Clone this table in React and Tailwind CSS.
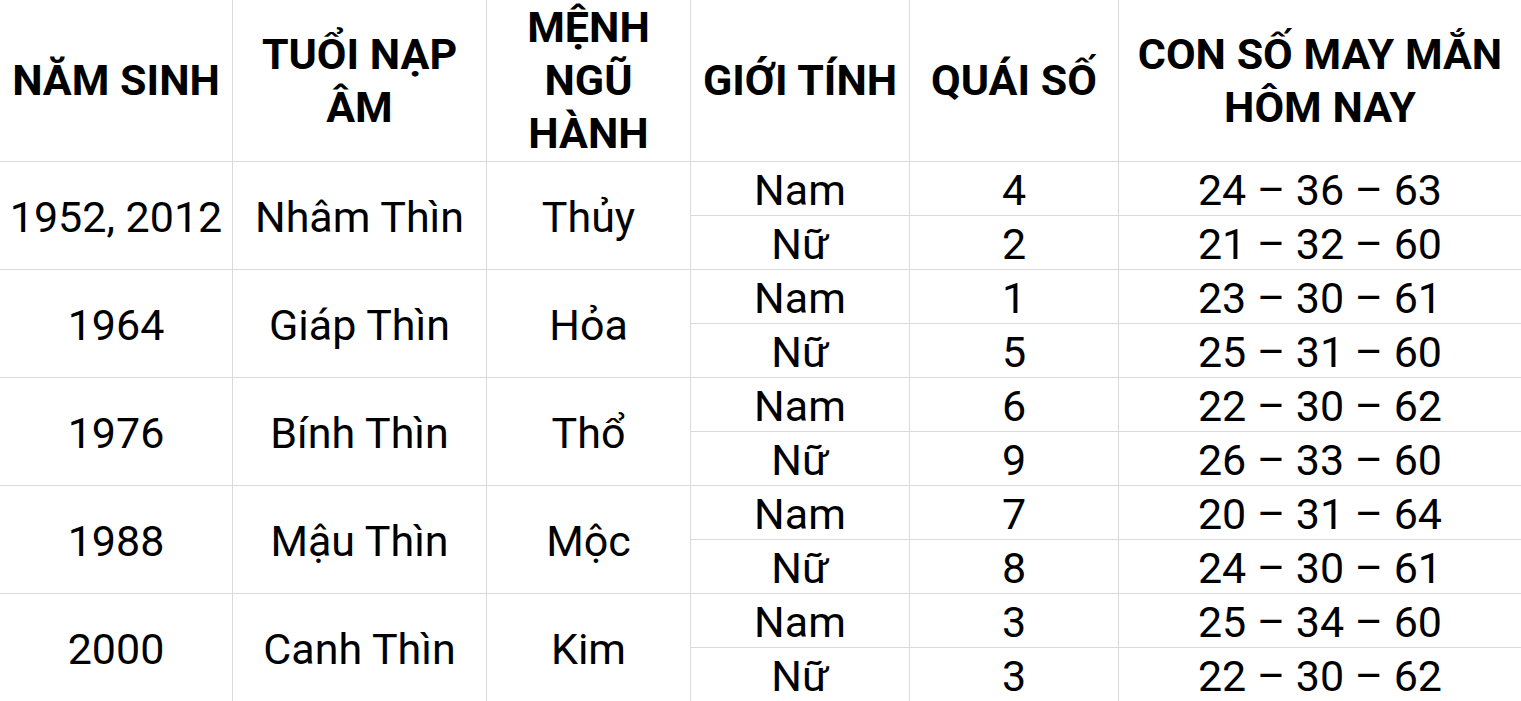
const rows = [
  {
    years: "1952, 2012",
    tuoi: "Nhâm Thìn",
    menh: "Thủy",
    items: [
      { gender: "Nam", quai: "4", lucky: "24 – 36 – 63" },
      { gender: "Nữ", quai: "2", lucky: "21 – 32 – 60" },
    ],
  },
  {
    years: "1964",
    tuoi: "Giáp Thìn",
    menh: "Hỏa",
    items: [
      { gender: "Nam", quai: "1", lucky: "23 – 30 – 61" },
      { gender: "Nữ", quai: "5", lucky: "25 – 31 – 60" },
    ],
  },
  {
    years: "1976",
    tuoi: "Bính Thìn",
    menh: "Thổ",
    items: [
      { gender: "Nam", quai: "6", lucky: "22 – 30 – 62" },
      { gender: "Nữ", quai: "9", lucky: "26 – 33 – 60" },
    ],
  },
  {
    years: "1988",
    tuoi: "Mậu Thìn",
    menh: "Mộc",
    items: [
      { gender: "Nam", quai: "7", lucky: "20 – 31 – 64" },
      { gender: "Nữ", quai: "8", lucky: "24 – 30 – 61" },
    ],
  },
  {
    years: "2000",
    tuoi: "Canh Thìn",
    menh: "Kim",
    items: [
      { gender: "Nam", quai: "3", lucky: "25 – 34 – 60" },
      { gender: "Nữ", quai: "3", lucky: "22 – 30 – 62" },
    ],
  },
];

const base =
  "flex items-center justify-center text-center border-r border-b border-[#dadada] whitespace-nowrap";
const cell = `${base} pt-[4px]`;

const HeadCell = ({ children }) => (
  <div className={`${base} font-bold leading-[53px]`}>
    <div>{children}</div>
  </div>
);

export default function App() {
  return (
    <div
      className="h-[701px] w-[1521px] overflow-hidden bg-white text-black"
      style={{ fontFamily: "Roboto, 'Noto Sans', sans-serif" }}
    >
      <div className="grid grid-cols-[233px_254px_204px_219px_209px_403px] grid-rows-[162px_repeat(10,54px)] text-[43px]">
        {/* Header */}
        <HeadCell>NĂM SINH</HeadCell>
        <HeadCell>
          TUỔI NẠP
          <br />
          ÂM
        </HeadCell>
        <HeadCell>
          MỆNH
          <br />
          NGŨ
          <br />
          HÀNH
        </HeadCell>
        <HeadCell>GIỚI TÍNH</HeadCell>
        <HeadCell>QUÁI SỐ</HeadCell>
        <HeadCell>
          CON SỐ MAY MẮN
          <br />
          HÔM NAY
        </HeadCell>

        {/* Body */}
        {rows.map((r) => (
          <div key={r.years} className="contents">
            <div className={`${cell} row-span-2`}>{r.years}</div>
            <div className={`${cell} row-span-2`}>{r.tuoi}</div>
            <div className={`${cell} row-span-2`}>{r.menh}</div>
            {r.items.map((it, i) => (
              <div key={i} className="contents">
                <div className={cell}>{it.gender}</div>
                <div className={cell}>{it.quai}</div>
                <div className={cell}>{it.lucky}</div>
              </div>
            ))}
          </div>
        ))}
      </div>
    </div>
  );
}
